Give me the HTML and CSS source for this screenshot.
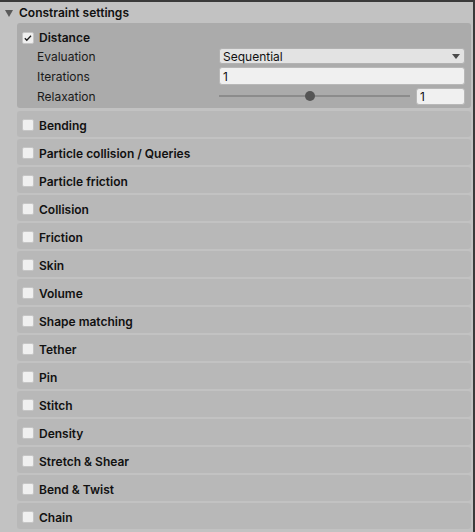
FILE: index.html
```html
<!DOCTYPE html>
<html lang="en">
<head>
    <meta charset="UTF-8">
    <meta name="viewport" content="width=device-width, initial-scale=1.0">
    <title>Constraint settings</title>
    <link rel="stylesheet" href="styles.css">
</head>
<body>
    <div class="inspector">
        <div class="foldout"><span class="arrow"></span>Constraint settings</div>
        <div class="constraints">
            <div class="group open">
                <div class="group-head">
                    <span class="check on">
                        <svg width="12" height="12" viewBox="0 0 12 12"><polyline points="2.8,6.2 4.8,8.2 9,3.8" fill="none" stroke="#1e1e1e" stroke-width="1.3"/></svg>
                    </span>
                    Distance
                </div>
                <div class="field-row">
                    <span class="field-label">Evaluation</span>
                    <div class="dropdown">Sequential<span class="caret"></span></div>
                </div>
                <div class="field-row">
                    <span class="field-label">Iterations</span>
                    <div class="text-field">1</div>
                </div>
                <div class="field-row">
                    <span class="field-label">Relaxation</span>
                    <div class="slider">
                        <div class="track"><span class="thumb"></span></div>
                        <div class="text-field small">1</div>
                    </div>
                </div>
            </div>
            <div class="group"><div class="group-head"><span class="check"></span>Bending</div></div>
            <div class="group"><div class="group-head"><span class="check"></span>Particle collision / Queries</div></div>
            <div class="group"><div class="group-head"><span class="check"></span>Particle friction</div></div>
            <div class="group"><div class="group-head"><span class="check"></span>Collision</div></div>
            <div class="group"><div class="group-head"><span class="check"></span>Friction</div></div>
            <div class="group"><div class="group-head"><span class="check"></span>Skin</div></div>
            <div class="group"><div class="group-head"><span class="check"></span>Volume</div></div>
            <div class="group"><div class="group-head"><span class="check"></span>Shape matching</div></div>
            <div class="group"><div class="group-head"><span class="check"></span>Tether</div></div>
            <div class="group"><div class="group-head"><span class="check"></span>Pin</div></div>
            <div class="group"><div class="group-head"><span class="check"></span>Stitch</div></div>
            <div class="group"><div class="group-head"><span class="check"></span>Density</div></div>
            <div class="group"><div class="group-head"><span class="check"></span>Stretch &amp; Shear</div></div>
            <div class="group"><div class="group-head"><span class="check"></span>Bend &amp; Twist</div></div>
            <div class="group"><div class="group-head"><span class="check"></span>Chain</div></div>
        </div>
    </div>
</body>
</html>
```

FILE: styles.css
```css
body {
    margin: 0;
    padding: 0;
    background-color: #3a3a3a;
    font-family: "Inter", "Noto Sans", sans-serif;
    font-size: 12px;
    color: #111;
    overflow: hidden;
}
.inspector {
    margin: 2px 2px 0 0;
    height: 530px;
    background-color: #c2c2c2;
}
.foldout {
    height: 21px;
    display: flex;
    align-items: center;
    font-weight: 600;
    padding-left: 5px;
}
.arrow {
    width: 0;
    height: 0;
    border-left: 4px solid transparent;
    border-right: 4px solid transparent;
    border-top: 7px solid #5a5a5a;
    margin-right: 6px;
    margin-top: 1px;
}
.constraints {
    padding: 0 2px 0 17px;
}
.group {
    background-color: #b8b8b8;
    border-radius: 3px;
    margin-bottom: 2px;
}
.group.open {
    background-color: #ababab;
    padding-bottom: 2px;
    margin-bottom: 3px;
}
.group-head {
    height: 26px;
    box-sizing: border-box;
    padding: 2px 0 0 5px;
    display: flex;
    align-items: center;
    font-weight: 600;
}
.group.open .group-head {
    height: 23px;
    padding-top: 6px;
}
.check {
    width: 12px;
    height: 12px;
    box-sizing: border-box;
    background-color: #f0f0f0;
    border: 1px solid #c6c6c6;
    border-radius: 2px;
    margin-right: 5px;
    display: flex;
}
.check svg {
    margin: -1px;
}
.field-row {
    height: 20px;
    display: flex;
    align-items: center;
    padding: 0 6px 0 20px;
}
.field-label {
    width: 182px;
    flex-shrink: 0;
    color: #1a1a1a;
}
.dropdown,
.text-field {
    flex: 1;
    height: 16px;
    box-sizing: border-box;
    border-radius: 3px;
    padding: 0 3px;
    display: flex;
    align-items: center;
}
.dropdown {
    background-color: #e3e3e3;
    border: 1px solid #b2b2b2;
    justify-content: space-between;
}
.caret {
    width: 0;
    height: 0;
    border-left: 4px solid transparent;
    border-right: 4px solid transparent;
    border-top: 5px solid #4a4a4a;
    margin-right: 1px;
}
.text-field {
    height: 18px;
    background-color: #f0f0f0;
    border: 1px solid #b8b8b8;
}
.slider {
    flex: 1;
    display: flex;
    align-items: center;
}
.track {
    flex: 1;
    height: 2px;
    background-color: #8c8c8c;
    margin-right: 6px;
    position: relative;
}
.thumb {
    position: absolute;
    left: 86px;
    top: -4px;
    width: 10px;
    height: 10px;
    border-radius: 50%;
    background-color: #555;
}
.text-field.small {
    flex: none;
    width: 49px;
    height: 17px;
}
```
